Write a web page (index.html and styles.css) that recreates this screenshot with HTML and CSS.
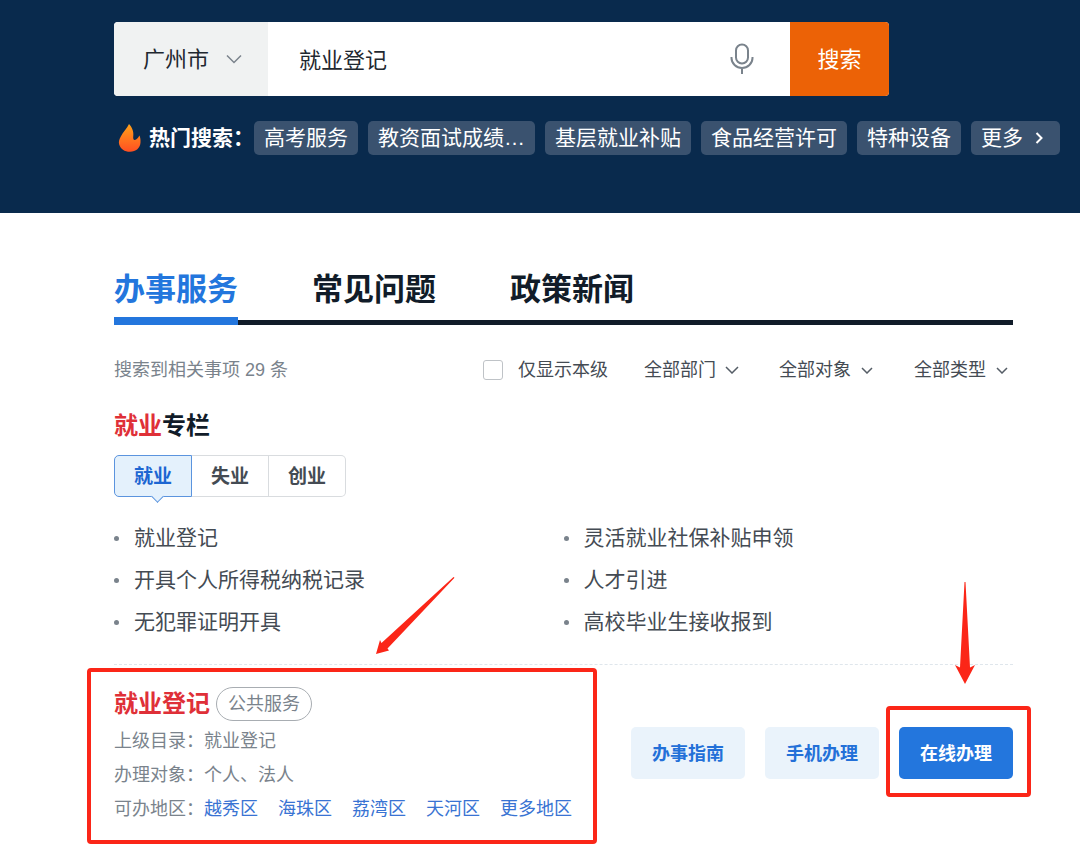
FILE: index.html
```html
<!DOCTYPE html>
<html lang="zh-CN">
<head>
<meta charset="utf-8">
<meta name="viewport" content="width=device-width, initial-scale=1">
<title>就业登记</title>
<link rel="stylesheet" href="styles.css">
</head>
<body>
<header class="hero">
  <form class="search">
    <div class="picker picker-city">
      <select aria-label="城市"><option>广州市</option></select>
      <svg class="chevron" width="16" height="10" viewBox="0 0 16 10" aria-hidden="true"><path d="M1 1.500l7 7 7-7"/></svg>
    </div>
    <input class="search-input" type="text" value="就业登记" aria-label="搜索内容">
    <button class="mic" type="button" aria-label="语音输入">
      <svg width="24" height="32" viewBox="0 0 24 32" aria-hidden="true"><rect x="6" y="1.500" width="12" height="19" rx="6"/><path d="M1.500 14v1a10.500 10 0 0 0 21 0v-1M12 25v6"/></svg>
    </button>
    <button class="search-submit" type="submit">搜索</button>
  </form>
  <div class="hot">
    <svg class="flame" width="24" height="30" viewBox="0 0 24 30" aria-hidden="true">
      <defs><linearGradient id="fire" x1="0" y1="0" x2="0" y2="1"><stop offset="0" stop-color="#ffa21a"/><stop offset="1" stop-color="#ff4f22"/></linearGradient></defs>
      <path fill="url(#fire)" d="M11 1C9 5.500 5 9 2.800 13.500C1 16.500 .5 19 1.200 21.500C2.500 26 6.500 28.800 12 28.800C18 28.800 22.200 25 22.500 19.500C22.700 16.500 22.300 14 21.300 12.500C20.300 15 18.500 16.800 16.800 17C15.200 17 15 15 15.300 12.500C15.800 8.500 14 4 11 1Z"/>
    </svg>
    <strong class="hot-label">热门搜索：</strong>
    <div class="tags">
      <a class="tag" href="#">高考服务</a>
      <a class="tag" href="#">教资面试成绩…</a>
      <a class="tag" href="#">基层就业补贴</a>
      <a class="tag" href="#">食品经营许可</a>
      <a class="tag" href="#">特种设备</a>
      <a class="tag" href="#">更多<svg class="more-arrow" width="8" height="12" viewBox="0 0 8 12" aria-hidden="true"><path d="M1.500 1l5 5-5 5"/></svg></a>
    </div>
  </div>
</header>

<main class="content">
  <nav class="tabs">
    <a class="tab tab-active" href="#">办事服务</a>
    <a class="tab" href="#">常见问题</a>
    <a class="tab" href="#">政策新闻</a>
  </nav>

  <div class="filters">
    <span class="count">搜索到相关事项 29 条</span>
    <label class="only"><input type="checkbox">仅显示本级</label>
    <div class="picker">
      <select aria-label="部门"><option>全部部门</option></select>
      <svg class="chevron" width="14" height="8" viewBox="0 0 14 8" aria-hidden="true"><path d="M1 1l6 6 6-6"/></svg>
    </div>
    <div class="picker">
      <select aria-label="对象"><option>全部对象</option></select>
      <svg class="chevron" width="14" height="8" viewBox="0 0 14 8" aria-hidden="true"><path d="M2 2l5 5 5-5"/></svg>
    </div>
    <div class="picker">
      <select aria-label="类型"><option>全部类型</option></select>
      <svg class="chevron" width="14" height="8" viewBox="0 0 14 8" aria-hidden="true"><path d="M2 2l5 5 5-5"/></svg>
    </div>
  </div>

  <section>
    <h2 class="topic-title"><em>就业</em>专栏</h2>
    <div class="segments">
      <button class="segment segment-active" type="button">就业</button>
      <button class="segment" type="button">失业</button>
      <button class="segment" type="button">创业</button>
    </div>
    <ul class="topics">
      <li><a href="#">就业登记</a></li>
      <li><a href="#">灵活就业社保补贴申领</a></li>
      <li><a href="#">开具个人所得税纳税记录</a></li>
      <li><a href="#">人才引进</a></li>
      <li><a href="#">无犯罪证明开具</a></li>
      <li><a href="#">高校毕业生接收报到</a></li>
    </ul>
  </section>

  <article class="result">
    <div class="details">
      <div class="result-head">
        <h3 class="result-title">就业登记</h3>
        <span class="pill">公共服务</span>
      </div>
      <p class="meta">上级目录：就业登记</p>
      <p class="meta">办理对象：个人、法人</p>
      <p class="meta">可办地区：<span class="areas"><a href="#">越秀区</a><a href="#">海珠区</a><a href="#">荔湾区</a><a href="#">天河区</a><a href="#">更多地区</a></span></p>
      <span class="frame frame-details"></span>
      <svg class="arrow arrow-details" width="80" height="80" viewBox="0 0 80 80" aria-hidden="true"><path d="M77.500 0L5.500 66L4 63L0 77L13 73.500L11.500 71.500L78.500 .8Z"/></svg>
    </div>
    <div class="actions">
      <button class="action" type="button">办事指南</button>
      <button class="action" type="button">手机办理</button>
      <div class="online">
        <button class="action action-primary" type="button">在线办理</button>
        <span class="frame frame-online"></span>
        <svg class="arrow arrow-online" width="22" height="102" viewBox="0 0 22 102" aria-hidden="true"><path d="M10.500 0h1L16 85.500L21 83L11 102L1 83L6 85.500Z"/></svg>
      </div>
    </div>
  </article>
</main>
</body>
</html>
```

FILE: styles.css
```css
* { box-sizing: border-box; }

body {
  margin: 0;
  background: #fff;
  color: #444b53;
  font-family: "Liberation Sans", "Noto Sans CJK SC", sans-serif;
  font-size: 18px;
}

a { color: inherit; text-decoration: none; }

button, input, select { font: inherit; color: inherit; }

button { border: 0; padding: 0; background: none; cursor: pointer; }

svg { fill: none; flex: none; }

/* Header */
.hero {
  padding: 22px 16px 58px 114px;
  background: #092a4d;
}

.search {
  display: flex;
  height: 74px;
  max-width: 775px;
  border-radius: 4px;
  overflow: hidden;
  background: #fff;
  color: #1f2830;
  font-size: 22px;
}

.picker { display: grid; align-items: center; }

.picker select {
  grid-area: 1 / 1;
  appearance: none;
  border: 0;
  padding: 0 27px 0 0;
  background: transparent;
}

.chevron {
  grid-area: 1 / 1;
  justify-self: end;
  margin-right: 4px;
  stroke: #555d66;
  stroke-width: 1.500;
  pointer-events: none;
}

.picker-city { background: #f0f2f2; }

.picker-city select { height: 100%; padding: 0 58px 0 29px; }

.picker-city .chevron { margin-right: 26px; stroke: #7a838c; }

.search-input {
  flex: 1;
  min-width: 0;
  border: 0;
  outline: 0;
  padding: 0 31px 2px;
  background: transparent;
}

.mic { display: grid; place-items: center; width: 96px; }

.mic svg { stroke: #7a838c; stroke-width: 2; }

.search-submit {
  width: 99px;
  padding-bottom: 4px;
  background: #ec6206;
  color: #fff;
}

.hot {
  display: flex;
  align-items: center;
  margin-top: 25px;
  padding-left: 4px;
  color: #fff;
  font-size: 21px;
  line-height: 30px;
  white-space: nowrap;
}

.hot-label { margin-left: 7px; }

.tags { display: flex; gap: 10px; }

.tag {
  display: flex;
  align-items: center;
  height: 34px;
  padding: 0 10px;
  border-radius: 5px;
  background: #3a526f;
}

.more-arrow {
  margin: 0 7px 0 12px;
  stroke: #fff;
  stroke-width: 2;
}

/* Body */
.content { padding: 55px 67px 20px 114px; }

.tabs {
  display: flex;
  gap: 74px;
  border-bottom: 5px solid #111c29;
  color: #111c29;
  font-size: 31px;
  font-weight: 700;
  line-height: 44px;
}

.tab {
  margin-bottom: -5px;
  padding-bottom: 5px;
  border-bottom: 8px solid transparent;
}

.tab-active { border-color: #2376dd; color: #2376dd; }

.filters {
  display: flex;
  align-items: center;
  gap: 36px;
  margin-top: 31px;
  line-height: 28px;
}

.count { margin-right: auto; color: #7a838c; }

.only { display: flex; align-items: center; gap: 15px; }

.only input {
  appearance: none;
  width: 20px;
  height: 20px;
  margin: 0;
  border: 1px solid #bfc3c7;
  border-radius: 3px;
}

.topic-title {
  margin: 26px 0 13px;
  color: #111c29;
  font-size: 24px;
  line-height: 32px;
}

.topic-title em { color: #df3038; font-style: normal; }

.segments { display: flex; }

.segment {
  height: 42px;
  padding: 0 19px 3px;
  border: 1px solid #d9dcdf;
  border-left-width: 0;
  font-size: 19px;
  font-weight: 700;
}

.segment:last-child { border-radius: 0 5px 5px 0; }

.segment-active {
  position: relative;
  border: 1px solid #5b94de;
  border-radius: 5px 0 0 5px;
  background: #e4f1fc;
  color: #1c66d2;
}

.segment-active::after {
  content: "";
  position: absolute;
  bottom: -5px;
  left: 38px;
  width: 8px;
  height: 8px;
  border: solid #5b94de;
  border-width: 0 1px 1px 0;
  background: #e4f1fc;
  transform: rotate(45deg);
}

.topics {
  display: grid;
  grid-template-columns: 1fr 1fr;
  margin: 20px 0 21px;
  padding: 0;
  list-style: none;
  font-size: 21px;
  line-height: 42px;
}

.topics li { display: flex; align-items: center; gap: 15px; }

.topics li::before {
  content: "";
  width: 5px;
  height: 5px;
  border-radius: 50%;
  background: #7a838c;
}

/* Result */
.result {
  display: flex;
  justify-content: space-between;
  padding-top: 22px;
  border-top: 1px dashed #dfe6ec;
}

.details { position: relative; color: #7a838c; }

.result-head { display: flex; align-items: center; gap: 6px; margin-bottom: 3px; }

.result-title { margin: 0; color: #df3038; font-size: 24px; line-height: 34px; }

.pill {
  padding: 0 11px;
  border: 1px solid #a8adb2;
  border-radius: 17px;
  line-height: 32px;
}

.meta { display: flex; margin: 0; line-height: 34px; }

.areas { display: flex; gap: 20px; color: #3973d3; }

.actions { display: flex; gap: 20px; align-self: flex-start; margin-top: 40px; }

.action {
  height: 52px;
  padding: 0 21px 2px;
  border-radius: 5px;
  background: #eaf3fb;
  color: #2370d8;
  font-weight: 700;
}

.action-primary { background: #2376dd; color: #fff; }

.online { position: relative; }

/* Red callouts drawn over the result */
.frame {
  position: absolute;
  border: 4px solid #fb2618;
  border-radius: 4px;
  pointer-events: none;
}

.frame-details { inset: -19px -25px -18px -27px; }

.frame-online { inset: -21px -18px -18px -13px; }

.arrow { position: absolute; fill: #fb2618; pointer-events: none; }

.arrow-details { top: -110px; left: 262px; }

.arrow-online { top: -145px; left: 55px; }
```
